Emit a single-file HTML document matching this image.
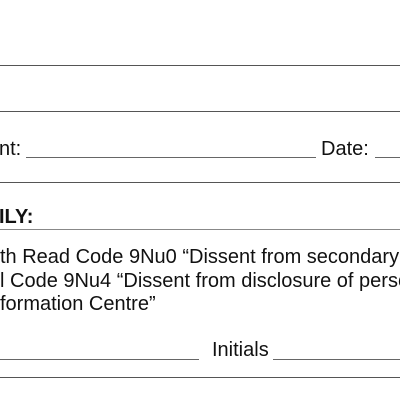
<!DOCTYPE html>
<html><head><style>
body{margin:0;width:400px;height:400px;background:#fff;position:relative;overflow:hidden;font-family:"Liberation Sans",Arial,sans-serif;color:#111}
.l{position:absolute;left:0;width:400px;height:1px;background:#555}
.t{position:absolute;font-size:20px;white-space:nowrap;line-height:1}
.u{position:absolute;height:1px;background:#666}
</style></head><body>
<div class="l" style="top:65px"></div>
<div class="l" style="top:111px"></div>
<div class="t" style="left:-1px;top:139px">nt:</div>
<div class="u" style="left:26px;top:157px;width:290px"></div>
<div class="t" style="left:321px;top:139px">Date:</div>
<div class="u" style="left:375px;top:157px;width:30px"></div>
<div class="l" style="top:182px"></div>
<div class="t" style="left:-1px;top:207px;font-weight:bold">ILY:</div>
<div class="l" style="top:229px;background:#888"></div>
<div class="t" style="left:0px;top:247px">th Read Code 9Nu0 “Dissent from secondary</div>
<div class="t" style="left:0px;top:271px">l Code 9Nu4 “Dissent from disclosure of perso</div>
<div class="t" style="left:0px;top:294px">formation Centre”</div>
<div class="u" style="left:0;top:359px;width:199px"></div>
<div class="t" style="left:212px;top:340px">Initials</div>
<div class="u" style="left:273px;top:359px;width:130px"></div>
<div class="l" style="top:377px"></div>
</body></html>
